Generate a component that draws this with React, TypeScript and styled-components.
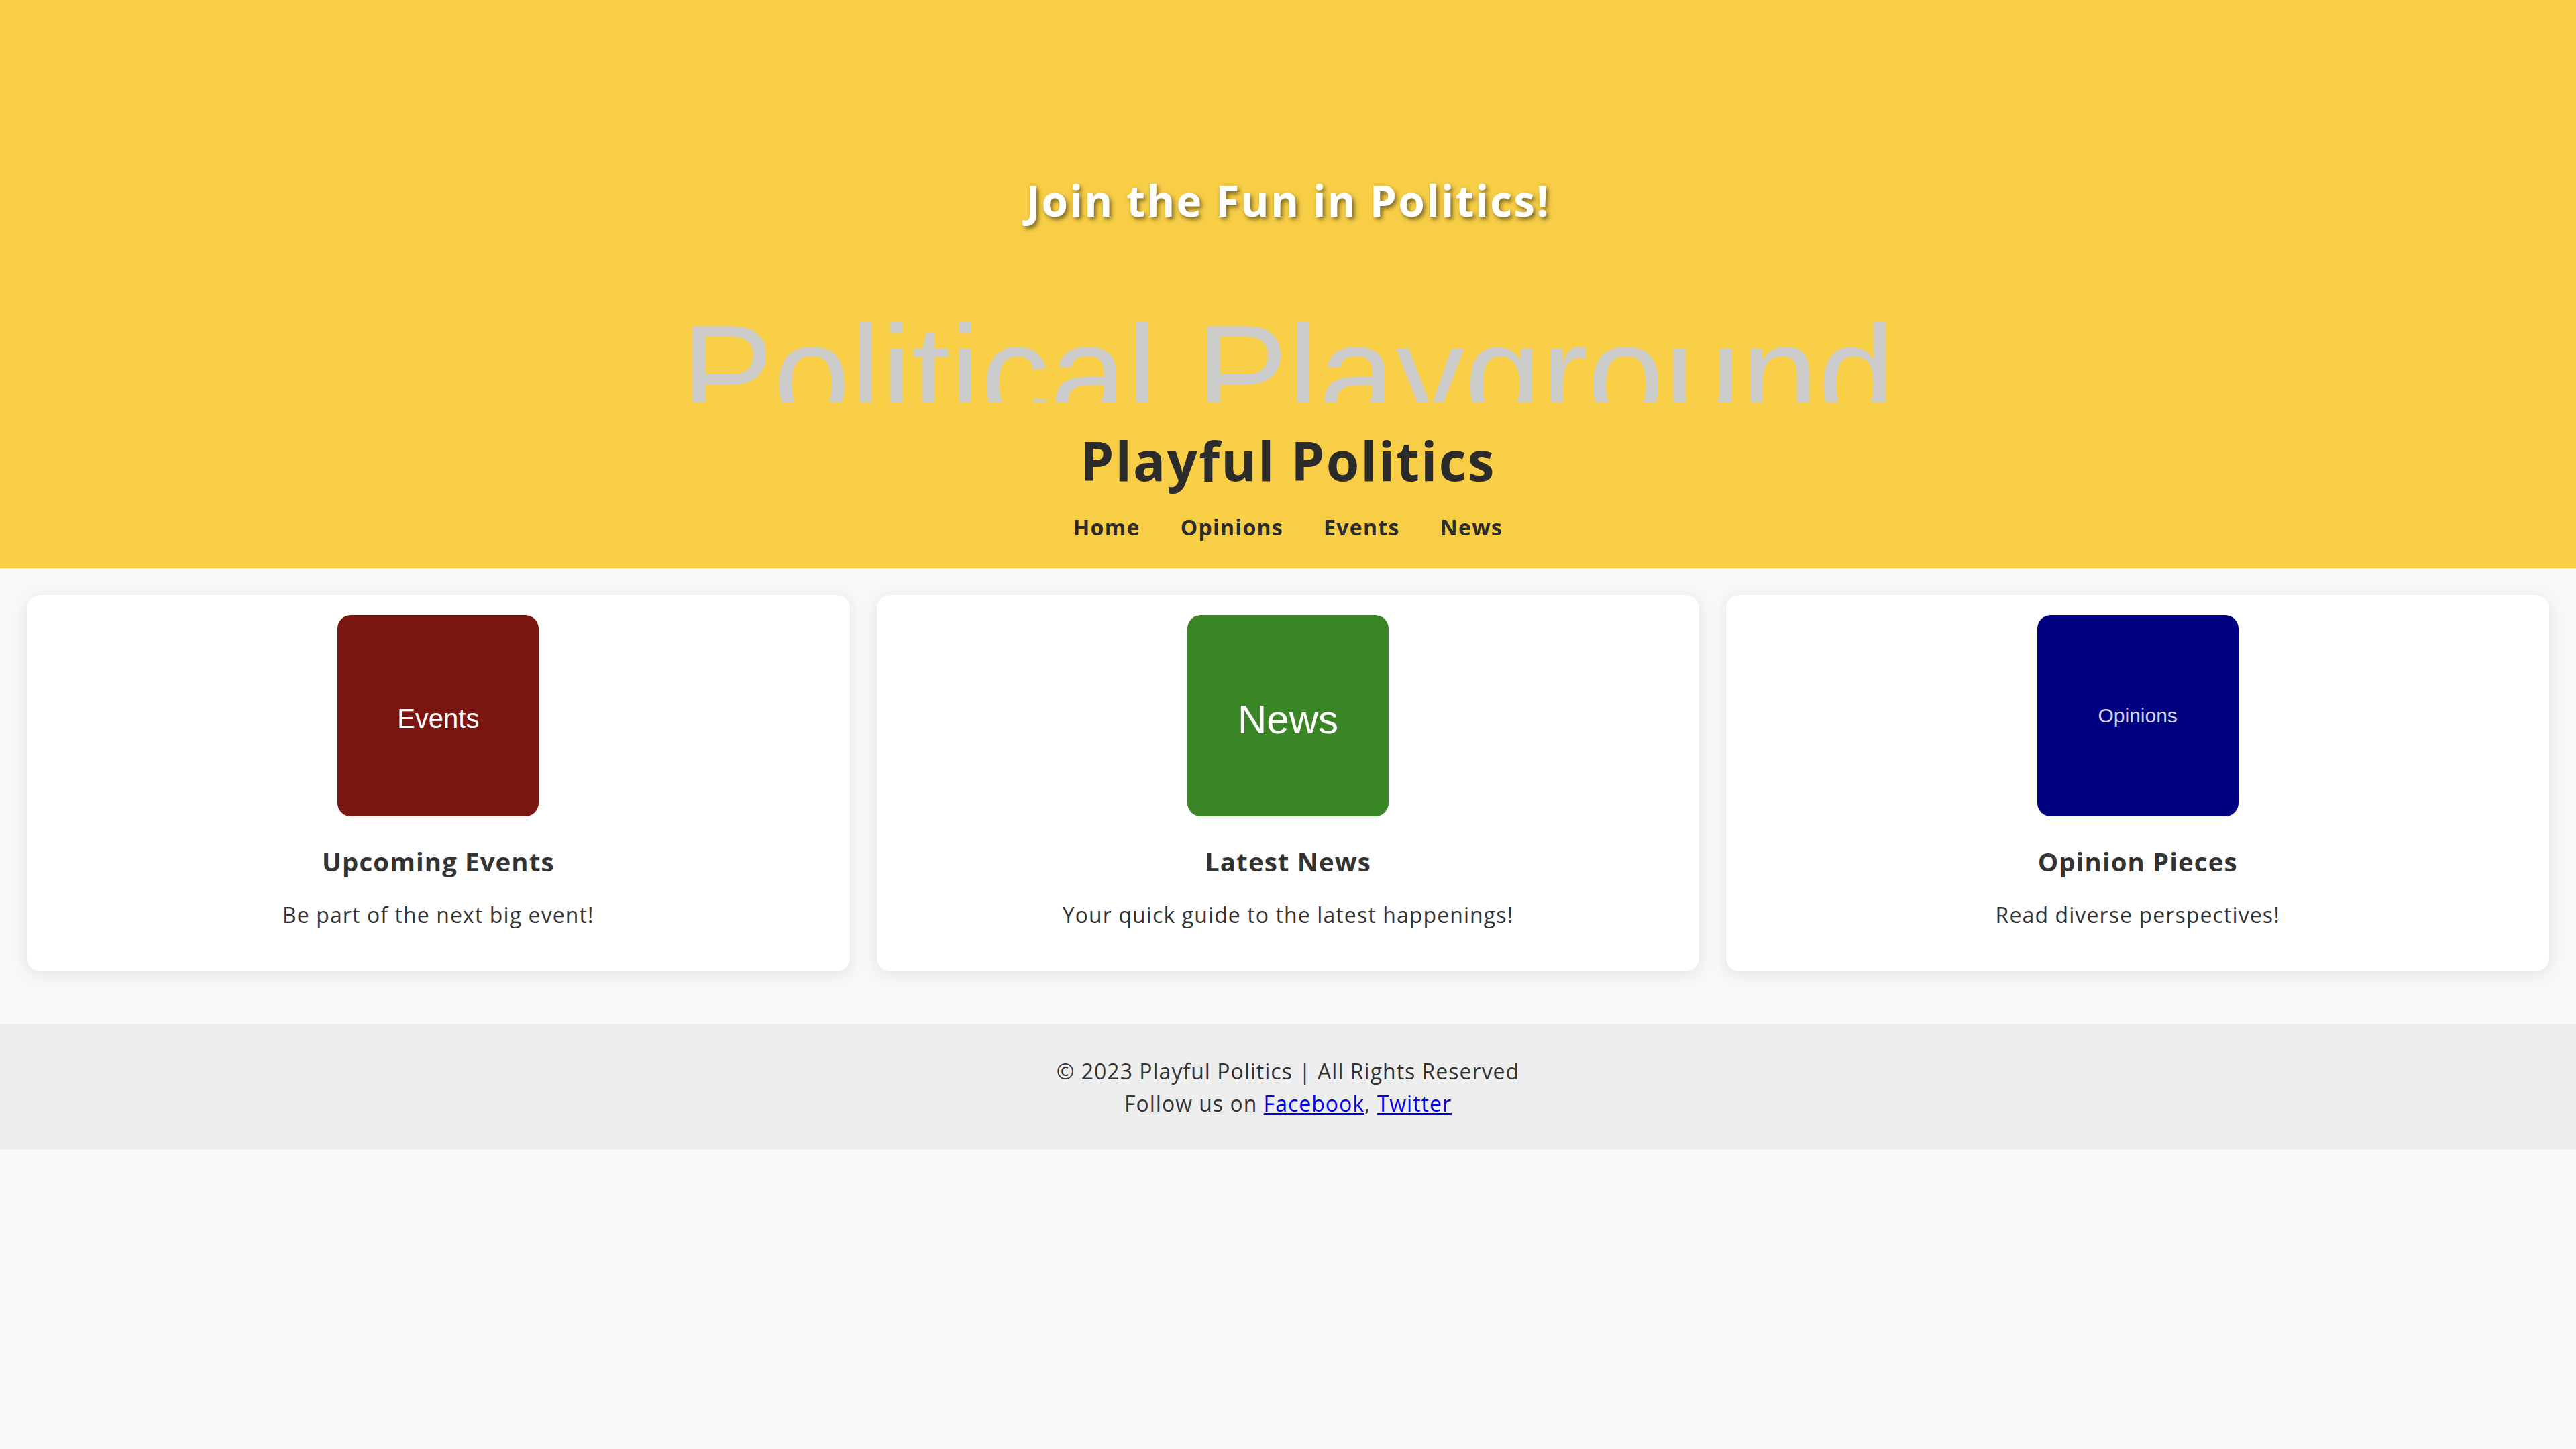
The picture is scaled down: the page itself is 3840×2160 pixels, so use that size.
import React from "react";
import styled, { createGlobalStyle } from "styled-components";

const GlobalStyle = createGlobalStyle`
  html, body {
    margin: 0;
    padding: 0;
    background: #f8f8f8;
  }
  body {
    font-family: "Open Sans", "Noto Sans", sans-serif;
    color: #333333;
    font-size: 32px;
  }
  * { box-sizing: border-box; }
`;

const Page = styled.div`
  display: flex;
  flex-direction: column;
  background: #f8f8f8;
`;

const Header = styled.header`
  background: #f7ce46;
  display: flex;
  flex-direction: column;
  align-items: center;
  padding: 267px 0 45px;
  text-align: center;
`;

const Tagline = styled.h2`
  margin: 0;
  font-size: 64px;
  line-height: 64px;
  font-weight: 700;
  color: #ffffff;
  letter-spacing: 2.2px;
  text-shadow: 3px 4px 6px rgba(0, 0, 0, 0.5);
`;

const MarqueeBox = styled.div`
  margin-top: 126px;
  height: 143px;
  overflow: hidden;
  width: 100%;
  display: flex;
  justify-content: center;
`;

const MarqueeText = styled.div`
  font-family: "Liberation Sans", Arial, sans-serif;
  font-size: 206px;
  line-height: 200px;
  color: #cccccc;
  white-space: nowrap;
`;

const Title = styled.h1`
  margin: 46px 0 0;
  font-size: 80px;
  line-height: 80px;
  font-weight: 700;
  color: #2b2b2b;
  letter-spacing: 2.1px;
`;

const Nav = styled.nav`
  margin-top: 44px;
  display: flex;
  gap: 60px;
`;

const NavLink = styled.a`
  font-size: 32px;
  line-height: 32px;
  font-weight: 700;
  color: #2b2b2b;
  text-decoration: none;
  letter-spacing: 1.3px;
`;

const Main = styled.main`
  padding: 40px 40px 78px;
  display: grid;
  grid-template-columns: repeat(3, 1fr);
  gap: 40px;
`;

const Card = styled.section`
  background: #ffffff;
  border-radius: 20px;
  box-shadow: 0 4px 24px rgba(0, 0, 0, 0.09);
  padding: 30px 30px 68px;
  display: flex;
  flex-direction: column;
  align-items: center;
  text-align: center;
`;

const Thumb = styled.div<{ $bg: string; $fg: string; $size: number; $shift: number }>`
  width: 300px;
  height: 300px;
  border-radius: 20px;
  background: ${(p) => p.$bg};
  color: ${(p) => p.$fg};
  font-family: "Liberation Sans", Arial, sans-serif;
  font-size: ${(p) => p.$size}px;
  padding-top: ${(p) => p.$shift}px;
  display: flex;
  align-items: center;
  justify-content: center;
`;

const CardTitle = styled.h3`
  margin: 48px 0 0;
  font-size: 38.4px;
  line-height: 38.4px;
  font-weight: 700;
  color: #333333;
  letter-spacing: 1.1px;
`;

const CardText = styled.p`
  margin: 45px 0 0;
  font-size: 32px;
  line-height: 32px;
  color: #333333;
  letter-spacing: 1.1px;
`;

const Footer = styled.footer`
  background: #eeeeee;
  padding: 47px 0 45px;
  text-align: center;
  font-size: 32px;
  line-height: 48px;
  color: #333333;
  letter-spacing: 1px;
`;

const FooterLine = styled.div``;

const FooterLink = styled.a`
  color: #0000ee;
  text-decoration: underline;
`;

const cards = [
  {
    label: "Events",
    bg: "#7b150f",
    fg: "#ffffff",
    size: 40,
    shift: 8,
    title: "Upcoming Events",
    text: "Be part of the next big event!",
  },
  {
    label: "News",
    bg: "#3a8526",
    fg: "#ffffff",
    size: 60,
    shift: 10,
    title: "Latest News",
    text: "Your quick guide to the latest happenings!",
  },
  {
    label: "Opinions",
    bg: "#000080",
    fg: "#d4d4f4",
    size: 30,
    shift: 0,
    title: "Opinion Pieces",
    text: "Read diverse perspectives!",
  },
];

export default function App() {
  return (
    <Page>
      <GlobalStyle />
      <Header>
        <Tagline>Join the Fun in Politics!</Tagline>
        <MarqueeBox>
          <MarqueeText>Political Playground</MarqueeText>
        </MarqueeBox>
        <Title>Playful Politics</Title>
        <Nav>
          <NavLink href="#">Home</NavLink>
          <NavLink href="#">Opinions</NavLink>
          <NavLink href="#">Events</NavLink>
          <NavLink href="#">News</NavLink>
        </Nav>
      </Header>
      <Main>
        {cards.map((c) => (
          <Card key={c.title}>
            <Thumb $bg={c.bg} $fg={c.fg} $size={c.size} $shift={c.shift}>
              {c.label}
            </Thumb>
            <CardTitle>{c.title}</CardTitle>
            <CardText>{c.text}</CardText>
          </Card>
        ))}
      </Main>
      <Footer>
        <FooterLine>© 2023 Playful Politics | All Rights Reserved</FooterLine>
        <FooterLine>
          Follow us on <FooterLink href="#">Facebook</FooterLink>,{" "}
          <FooterLink href="#">Twitter</FooterLink>
        </FooterLine>
      </Footer>
    </Page>
  );
}
